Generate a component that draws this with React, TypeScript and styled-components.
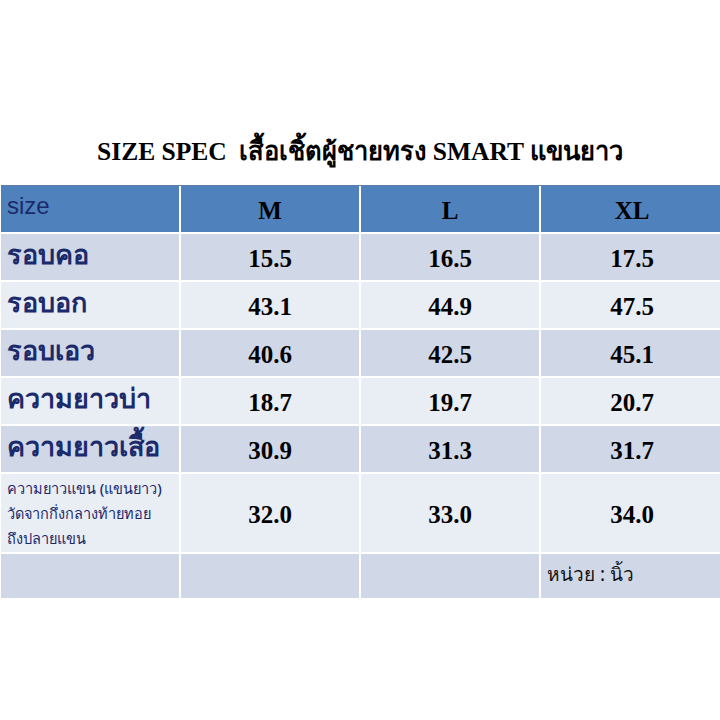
import React from "react";
import styled, { createGlobalStyle } from "styled-components";

const Global = createGlobalStyle`
  html, body { margin: 0; padding: 0; background: #ffffff; }
  body { width: 720px; height: 720px; overflow: hidden; }
`;

const Page = styled.div`
  width: 720px;
  height: 720px;
  display: flex;
  flex-direction: column;
  align-items: stretch;
  background: #fff;
`;

const Title = styled.h1`
  margin: 132px 0 0 0;
  height: 40px;
  text-align: center;
  font-family: "Liberation Serif", "Times New Roman", serif;
  font-weight: 700;
  font-size: 25.5px;
  line-height: 40px;
  color: #000;
  white-space: pre;
`;

const Table = styled.div`
  margin: 13px 0 0 1px;
  width: 722px;
  display: grid;
  grid-template-columns: 178px 178px 178px 182px;
  grid-template-rows: 46px 46px 46px 46px 46px 46px 78px 44px;
  gap: 2px;
  background: #ffffff;
  border-top: 1px solid #5d7fa6;
`;

const Cell = styled.div<{ $tone: "head" | "dark" | "light" }>`
  background: ${(p) =>
    p.$tone === "head" ? "#4f81bd" : p.$tone === "dark" ? "#d0d8e8" : "#e9edf4"};
  display: flex;
  align-items: center;
  overflow: hidden;
`;

const HeadLabel = styled.span`
  font-family: "Liberation Sans", Arial, sans-serif;
  font-size: 24px;
  color: #1b2a6b;
  padding-left: 6px;
  margin-top: -6px;
`;

const SizeHead = styled.span`
  width: 100%;
  text-align: center;
  font-family: "Liberation Serif", "Times New Roman", serif;
  font-weight: 700;
  font-size: 25px;
  color: #000;
  margin-top: 4px;
`;

const RowLabel = styled.span`
  font-family: "Noto Sans", "Liberation Sans", sans-serif;
  font-weight: 600;
  font-size: 27px;
  color: #1b2a6b;
  padding-left: 6px;
  white-space: nowrap;
  margin-top: -5px;
`;

const SmallLabel = styled.span`
  font-family: "Noto Sans", "Liberation Sans", sans-serif;
  font-size: 14.5px;
  font-weight: 500;
  line-height: 25px;
  color: #1b2a6b;
  padding-left: 6px;
  white-space: nowrap;
`;

const Value = styled.span`
  width: 100%;
  text-align: center;
  font-family: "Liberation Serif", "Times New Roman", serif;
  font-weight: 700;
  font-size: 25px;
  color: #000;
  margin-top: 4px;
`;

const Unit = styled.span`
  font-family: "Noto Sans", "Liberation Sans", sans-serif;
  font-size: 19px;
  color: #111;
  padding-left: 6px;
  margin-top: -4px;
`;

const rows: { label: string; values: string[] }[] = [
  { label: "รอบคอ", values: ["15.5", "16.5", "17.5"] },
  { label: "รอบอก", values: ["43.1", "44.9", "47.5"] },
  { label: "รอบเอว", values: ["40.6", "42.5", "45.1"] },
  { label: "ความยาวบ่า", values: ["18.7", "19.7", "20.7"] },
  { label: "ความยาวเสื้อ", values: ["30.9", "31.3", "31.7"] },
];

export default function App() {
  return (
    <Page>
      <Global />
      <Title>{"SIZE SPEC  เสื้อเชิ้ตผู้ชายทรง SMART แขนยาว"}</Title>
      <Table>
        <Cell $tone="head">
          <HeadLabel>size</HeadLabel>
        </Cell>
        {["M", "L", "XL"].map((s) => (
          <Cell $tone="head" key={s}>
            <SizeHead>{s}</SizeHead>
          </Cell>
        ))}
        {rows.map((r, i) => {
          const tone = i % 2 === 0 ? "dark" : "light";
          return (
            <React.Fragment key={r.label}>
              <Cell $tone={tone}>
                <RowLabel>{r.label}</RowLabel>
              </Cell>
              {r.values.map((v, j) => (
                <Cell $tone={tone} key={j}>
                  <Value>{v}</Value>
                </Cell>
              ))}
            </React.Fragment>
          );
        })}
        <Cell $tone="light">
          <SmallLabel>
            ความยาวแขน (แขนยาว)
            <br />
            วัดจากกึ่งกลางท้ายทอย
            <br />
            ถึงปลายแขน
          </SmallLabel>
        </Cell>
        {["32.0", "33.0", "34.0"].map((v) => (
          <Cell $tone="light" key={v}>
            <Value>{v}</Value>
          </Cell>
        ))}
        <Cell $tone="dark" />
        <Cell $tone="dark" />
        <Cell $tone="dark" />
        <Cell $tone="dark">
          <Unit>หน่วย : นิ้ว</Unit>
        </Cell>
      </Table>
    </Page>
  );
}
